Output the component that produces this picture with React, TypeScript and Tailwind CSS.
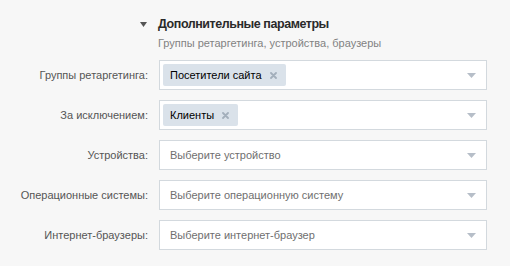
const font = { fontFamily: '"Liberation Sans", Arial, sans-serif' };

function Caret() {
  return (
    <svg width="9" height="5" viewBox="0 0 9 5" className="shrink-0">
      <path d="M0 0h9L4.5 5z" fill="#b6bec8" />
    </svg>
  );
}

function Tag({ label }: { label: string }) {
  return (
    <div className="flex h-[22px] items-center rounded-[2px] bg-[#dae2ea] pl-[7px] pr-[9px] text-[11px] text-[#000]">
      <span>{label}</span>
      <svg width="7" height="7" viewBox="0 0 7 7" className="ml-[8px]">
        <path d="M1 1l5 5M6 1L1 6" stroke="#a3afbb" strokeWidth="1.8" strokeLinecap="round" />
      </svg>
    </div>
  );
}

const rows = [
  { label: 'Группы ретаргетинга:', tag: 'Посетители сайта' },
  { label: 'За исключением:', tag: 'Клиенты' },
  { label: 'Устройства:', placeholder: 'Выберите устройство' },
  { label: 'Операционные системы:', placeholder: 'Выберите операционную систему' },
  { label: 'Интернет-браузеры:', placeholder: 'Выберите интернет-браузер' },
];

export default function App() {
  return (
    <div className="h-[266px] w-[510px] overflow-hidden bg-[#f7f7f7]" style={font}>
      <div className="pl-[140px] pt-[16px]">
        <div className="flex items-center">
          <svg width="7" height="5" viewBox="0 0 7 5">
            <path d="M0 0h7L3.5 5z" fill="#555" />
          </svg>
          <span className="ml-[11px] text-[12.5px] font-bold leading-[16px] tracking-[-0.45px] text-[#2a2a2a]">Дополнительные параметры</span>
        </div>
        <div className="mt-[3px] pl-[18px] text-[11px] leading-[16px] text-[#828282]">
          Группы ретаргетинга, устройства, браузеры
        </div>
      </div>

      <div className="mt-[9px] flex flex-col gap-[10px]">
        {rows.map((r, i) => (
          <div key={i} className="flex items-center">
            <div className="w-[159px] shrink-0 whitespace-nowrap pr-[11px] text-right text-[11px] text-[#555]">{r.label}</div>
            <div className="flex h-[30px] w-[328px] shrink-0 items-center border border-[#d3d9de] bg-white pr-[10px]">
              <div className="flex flex-1 items-center">
                {r.tag ? (
                  <div className="pl-[3px]">
                    <Tag label={r.tag} />
                  </div>
                ) : (
                  <span className="pl-[10px] text-[11px] text-[#6f6f6f]">{r.placeholder}</span>
                )}
              </div>
              <Caret />
            </div>
          </div>
        ))}
      </div>
    </div>
  );
}
